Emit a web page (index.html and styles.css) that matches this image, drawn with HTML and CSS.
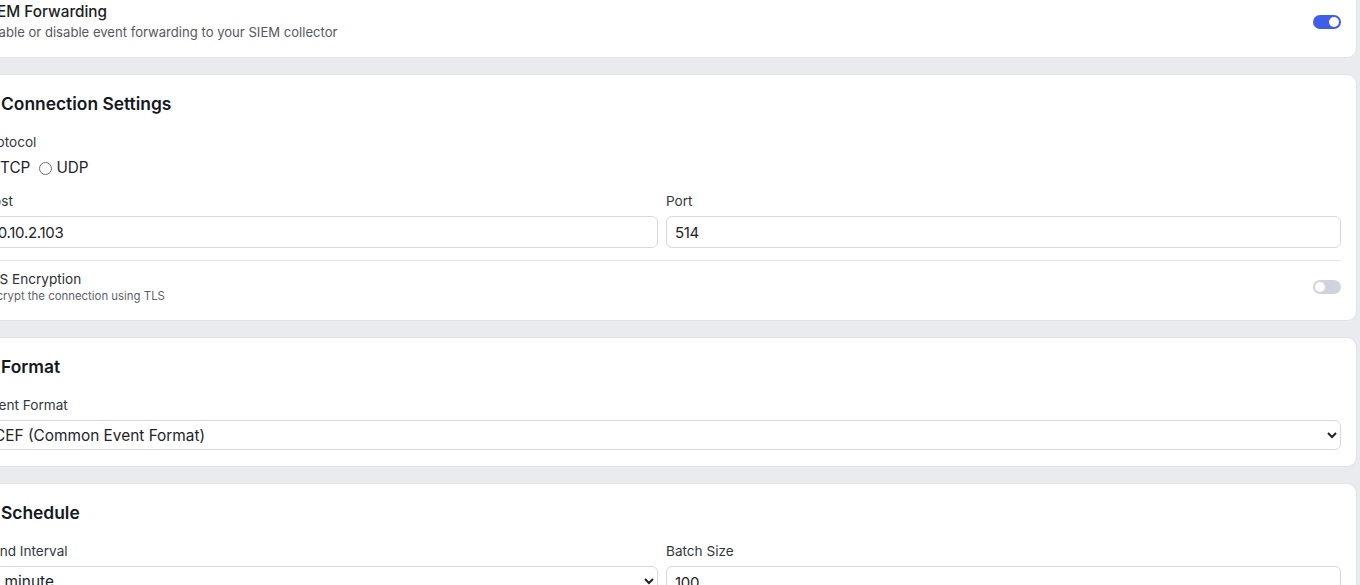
FILE: index.html
```html
<!DOCTYPE html>
<html lang="en">
<head>
<meta charset="utf-8">
<title>SIEM Forwarding</title>
<link rel="stylesheet" href="styles.css">
</head>
<body>
<div class="page">
  <section class="card card-toggle">
    <div class="row">
      <div class="row-text">
        <div class="row-title">SIEM Forwarding</div>
        <div class="row-desc">Enable or disable event forwarding to your SIEM collector</div>
      </div>
      <span class="switch on"><span class="knob"></span></span>
    </div>
  </section>

  <section class="card">
    <h2 class="card-title">
      <svg class="title-icon" viewBox="0 0 16 16" width="14" height="14"><path d="M5 1v4M11 1v4M3 5h10v3a5 5 0 0 1-10 0zM8 13v2" fill="none" stroke="#444" stroke-width="1.5"/></svg>
      <span>Connection Settings</span>
    </h2>
    <div class="field">
      <div class="label">Protocol</div>
      <div class="radios">
        <label class="radio"><span class="dot checked"></span>TCP</label>
        <label class="radio"><span class="dot"></span>UDP</label>
      </div>
    </div>
    <div class="grid2">
      <div>
        <div class="label">Host</div>
        <input class="input" type="text" value="10.10.2.103">
      </div>
      <div>
        <div class="label">Port</div>
        <input class="input" type="text" value="514">
      </div>
    </div>
    <div class="row divider-row">
      <div class="row-text">
        <div class="sub-title">TLS Encryption</div>
        <div class="sub-desc">Encrypt the connection using TLS</div>
      </div>
      <span class="switch"><span class="knob"></span></span>
    </div>
  </section>

  <section class="card">
    <h2 class="card-title">
      <svg class="title-icon" viewBox="0 0 16 16" width="14" height="14"><path d="M3 2h7l3 3v9H3zM5 8h6M5 11h6" fill="none" stroke="#444" stroke-width="1.5"/></svg>
      <span>Format</span>
    </h2>
    <div class="label">Event Format</div>
    <select class="select">
      <option>CEF (Common Event Format)</option>
      <option>LEEF</option>
      <option>Syslog (RFC 5424)</option>
      <option>JSON</option>
    </select>
  </section>

  <section class="card">
    <h2 class="card-title">
      <svg class="title-icon" viewBox="0 0 16 16" width="14" height="14"><circle cx="8" cy="8" r="6" fill="none" stroke="#444" stroke-width="1.5"/><path d="M8 4.5V8l2.5 1.5" fill="none" stroke="#444" stroke-width="1.5"/></svg>
      <span>Schedule</span>
    </h2>
    <div class="grid2">
      <div>
        <div class="label">Send Interval</div>
        <select class="select">
          <option>1 minute</option>
          <option>5 minutes</option>
          <option>15 minutes</option>
        </select>
      </div>
      <div>
        <div class="label">Batch Size</div>
        <input class="input" type="text" value="100">
      </div>
    </div>
  </section>
</div>
</body>
</html>
```

FILE: styles.css
```css
* { box-sizing: border-box; }

html, body {
  margin: 0;
  padding: 0;
  overflow: hidden;
}

body {
  background: #e9ebef;
  font-family: Inter, "Noto Sans", sans-serif;
  color: #1f2329;
  width: 1360px;
  height: 585px;
}

.page {
  margin: -15px 3px 0 -33px;
  display: flex;
  flex-direction: column;
  gap: 16px;
}

.card {
  background: #ffffff;
  border: 1px solid #dfe2e7;
  border-radius: 10px;
  padding: 16px 15px;
}

.row {
  display: flex;
  align-items: center;
  justify-content: space-between;
}

.row-title {
  font-size: 15.3px;
  line-height: 20px;
  font-weight: 500;
  color: #1b1e22;
}

.row-desc {
  margin-top: 1px;
  font-size: 13.1px;
  line-height: 18px;
  color: #55595f;
}

.switch {
  position: relative;
  width: 28px;
  height: 14px;
  border-radius: 7px;
  background: #cfd3dc;
  flex: none;
}

.switch .knob {
  position: absolute;
  top: 2px;
  left: 2px;
  width: 10px;
  height: 10px;
  border-radius: 50%;
  background: #ffffff;
}

.switch.on { background: #3f5fe8; }
.switch.on .knob { left: 16px; }

.card-title {
  margin: 0 0 16px;
  display: flex;
  align-items: center;
  gap: 4px;
  font-size: 17.4px;
  line-height: 26px;
  font-weight: 600;
  color: #15181c;
}

.title-icon { flex: none; }

.label {
  font-size: 13.6px;
  line-height: 18px;
  color: #33373d;
  margin-bottom: 6px;
}

.field { margin-bottom: 13px; }

.radios {
  display: flex;
  align-items: center;
  gap: 9px;
  font-size: 15.3px;
  line-height: 22px;
}

.radio {
  display: inline-flex;
  align-items: center;
  gap: 4px;
  color: #1f2329;
}

.dot {
  width: 13px;
  height: 13px;
  border-radius: 50%;
  border: 1px solid #6b6f76;
  background: #fff;
}

.dot.checked {
  border: 4px solid #3f5fe8;
}

.grid2 {
  display: grid;
  grid-template-columns: 1fr 1fr;
  gap: 8px;
}

.input, .select {
  display: block;
  width: 100%;
  font-family: inherit;
  font-size: 15px;
  color: #1f2329;
  background: #ffffff;
  border: 1px solid #d5d8de;
  border-radius: 6px;
  padding: 0 8px;
  outline: none;
}

.input { height: 32px; letter-spacing: -0.3px; }
.select { height: 30px; padding: 0 6px; font-size: 15.4px; }

.divider-row {
  margin-top: 12px;
  padding-top: 8px;
  border-top: 1px solid #e3e5e9;
}

.sub-title {
  font-size: 13.6px;
  line-height: 20px;
  color: #2a2e34;
}

.sub-desc {
  font-size: 11.4px;
  line-height: 15px;
  color: #5d6168;
}
```
